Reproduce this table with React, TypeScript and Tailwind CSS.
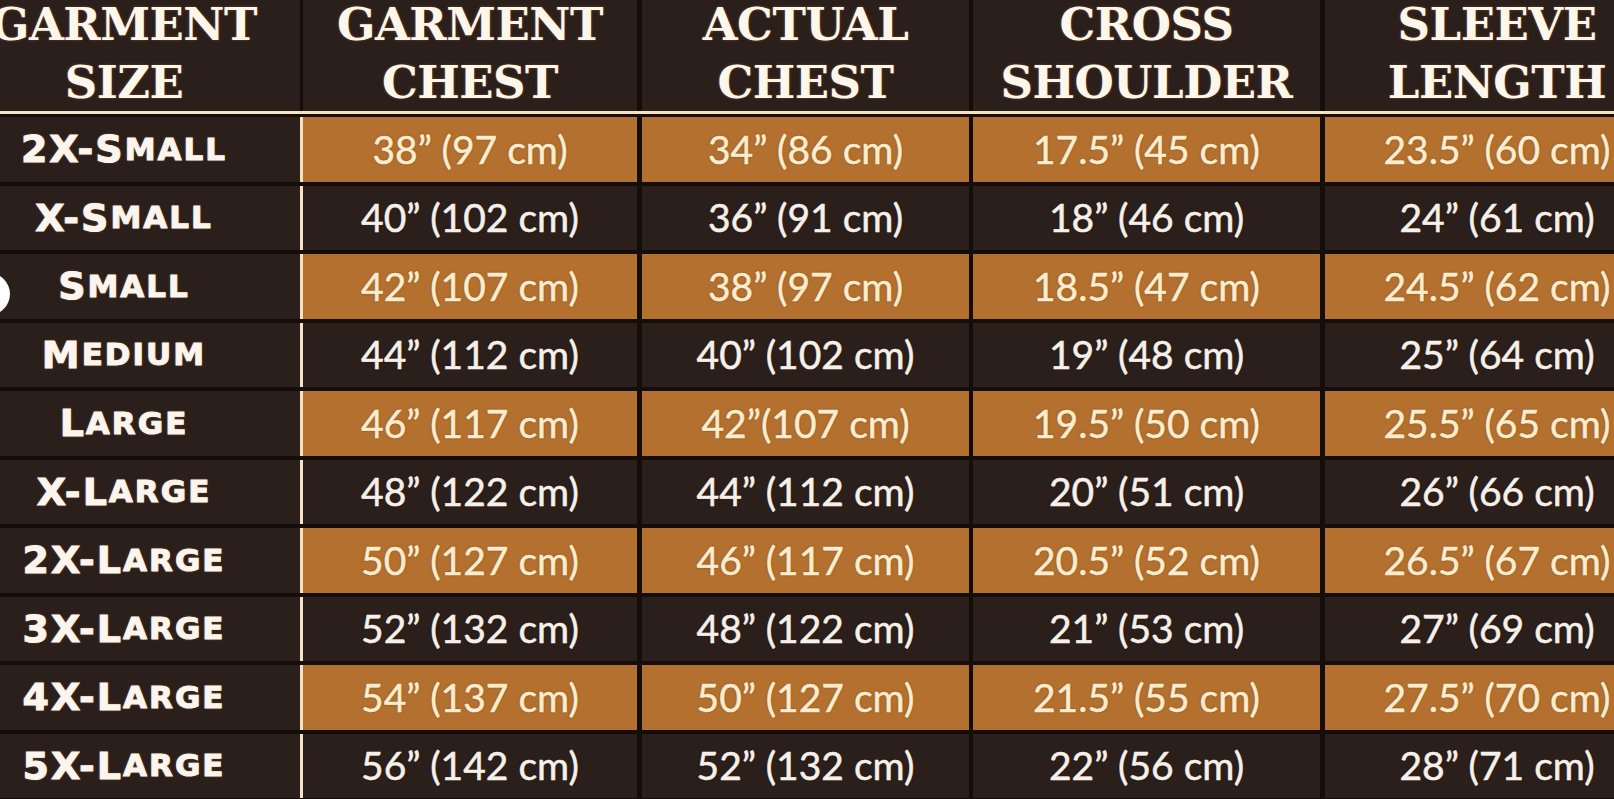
const headers = [
  ['GARMENT', 'SIZE'],
  ['GARMENT', 'CHEST'],
  ['ACTUAL', 'CHEST'],
  ['CROSS', 'SHOULDER'],
  ['SLEEVE', 'LENGTH'],
];

// [big caps, small caps, chest, actual chest, shoulder, sleeve]
const rows = [
  ['2X-S', 'MALL', '38” (97 cm)', '34” (86 cm)', '17.5” (45 cm)', '23.5” (60 cm)'],
  ['X-S', 'MALL', '40” (102 cm)', '36” (91 cm)', '18” (46 cm)', '24” (61 cm)'],
  ['S', 'MALL', '42” (107 cm)', '38” (97 cm)', '18.5” (47 cm)', '24.5” (62 cm)'],
  ['M', 'EDIUM', '44” (112 cm)', '40” (102 cm)', '19” (48 cm)', '25” (64 cm)'],
  ['L', 'ARGE', '46” (117 cm)', '42”(107 cm)', '19.5” (50 cm)', '25.5” (65 cm)'],
  ['X-L', 'ARGE', '48” (122 cm)', '44” (112 cm)', '20” (51 cm)', '26” (66 cm)'],
  ['2X-L', 'ARGE', '50” (127 cm)', '46” (117 cm)', '20.5” (52 cm)', '26.5” (67 cm)'],
  ['3X-L', 'ARGE', '52” (132 cm)', '48” (122 cm)', '21” (53 cm)', '27” (69 cm)'],
  ['4X-L', 'ARGE', '54” (137 cm)', '50” (127 cm)', '21.5” (55 cm)', '27.5” (70 cm)'],
  ['5X-L', 'ARGE', '56” (142 cm)', '52” (132 cm)', '22” (56 cm)', '28” (71 cm)'],
];

// value column widths and the dark gap in front of each
const valueCols = [
  'w-[334px] ml-0',
  'w-[327px] ml-[5px]',
  'w-[347px] ml-[4px]',
  'w-[344px] ml-[5px]',
];

export default function App() {
  return (
    <div className="relative h-[799px] w-[1614px] overflow-hidden bg-[#140d0a]">
      <div className="ml-[-52px] flex w-[1721px] flex-col">
        {/* header */}
        <div className="flex h-[111px]">
          {headers.map((h, i) => (
            <div
              key={i}
              className={
                'flex h-full items-end justify-center bg-[#2a1f1b] ' +
                (i === 0 ? 'w-[352px] mr-[3px]' : valueCols[i - 1])
              }
            >
              <div className="mb-[-1px] flex flex-col items-center font-['DejaVu_Serif',serif] text-[45px] font-bold leading-[58px] tracking-[-0.5px] text-[#fdf6ea] [text-shadow:0_0_3px_rgba(120,70,40,0.9)]">
                <span>{h[0]}</span>
                <span>{h[1]}</span>
              </div>
            </div>
          ))}
        </div>

        <div className="h-[3px] bg-[#f6e1c4]" />

        {/* body */}
        <div className="flex flex-col gap-[4px] pt-[3px]">
          {rows.map((r, ri) => {
            const orange = ri % 2 === 0;
            return (
              <div key={ri} className="flex h-[64.5px]">
                <div className="flex w-[352px] items-center justify-center bg-[#2a1f1b] font-['DejaVu_Sans',sans-serif] font-bold tracking-[2px] text-[#fbf5ee] [-webkit-text-stroke:1px_#fbf5ee] [text-shadow:0_0_3px_rgba(140,90,50,0.8)]">
                  <span className="text-[38px] leading-none">{r[0]}</span>
                  <span className="text-[31px] leading-none">{r[1]}</span>
                </div>
                <div className="w-[3px] bg-[#f6e1c4]" />
                {r.slice(2).map((v, ci) => (
                  <div
                    key={ci}
                    className={
                      'flex items-center justify-center font-[Lato,sans-serif] text-[39px] leading-none [text-shadow:0_0_2px_rgba(60,30,10,0.6)] ' +
                      valueCols[ci] +
                      (orange
                        ? ' bg-[#b3702e] text-[#fdecce] [-webkit-text-stroke:0.5px_#fdecce]'
                        : ' bg-[#2a1f1b] text-[#f5f0ea] [-webkit-text-stroke:0.5px_#f5f0ea]')
                    }
                  >
                    {v}
                  </div>
                ))}
              </div>
            );
          })}
        </div>
      </div>

      {/* carousel button peeking in from the left edge */}
      <div className="absolute left-[-32px] top-[273px] h-[42px] w-[42px] rounded-full bg-white" />
    </div>
  );
}
